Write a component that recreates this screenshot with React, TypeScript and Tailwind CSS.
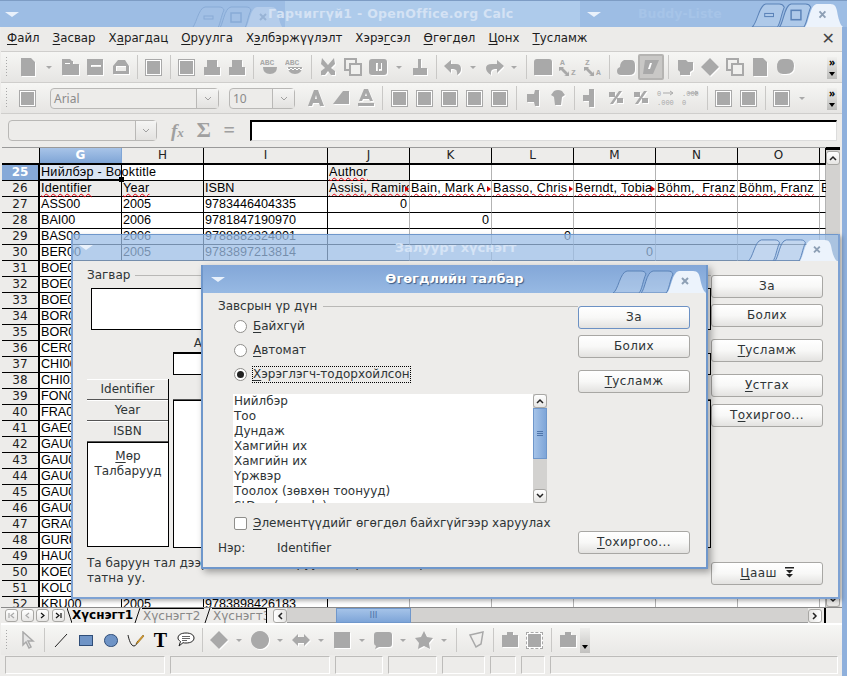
import React from "react";

const ui = "font-['DejaVu_Sans',sans-serif]";
const GRAY = "#a9a9a9";

const shapes: Record<string, string> = {
  doc: "M3 1h10l4 4v14H3z",
  open: "M1 2h8l2 2h1v3h6v11H1zM4 6v1h5V6z",
  save: "M1 2h16v16H1zM5 8v2h10V8z",
  mail: "M2 9l5-6h7l4 6v8H2zM5 9v5h10V9z",
  print: "M5 3h10v7h3v8H2v-8h3z",
  cut: "M4 1l6 7 6-7 1 6-4 4 4 3v4h-4l-3-4-3 4H3v-4l4-3-4-4z",
  paste: "M4 2h12q3 0 3 3v10q0 3-3 3H4q-3 0-3-3V5q0-3 3-3zM8 6v8h2V6zM13 6v6h-2v2h3V6z",
  brush: "M8 2h3v9h6v7H3v-7h5z",
  undo: "M8 3v4h5q5 0 5 5 0 4-4 6 1-6-4-6H8v4L1 9z",
  redo: "M13 3l7 6-7 7v-4h-2q-5 0-4 6-5-3-5-7 0-4 6-4h5z",
  table: "M4 2h12q3 0 3 3v13H1V5q0-3 3-3z",
  chart: "M8 3h7q4 0 4 5v5q0 5-6 5H5q-4 0-4-4 0-3 3-4 0-5 4-7z",
  nav: "M3 3h8l2 2h5v8l-3 2v3H5v-3l-2-2z",
  diamond: "M10 1l9 9-9 9-9-9z",
  blob: "M8 2h5q6 0 6 7 0 8-8 8H8q-6 0-6-7 0-8 6-8z",
  square: "M2 2h16v16H2z",
  circle: "M10 1a9 9 0 1 0 .01 0z",
  arrows: "M7 4v3h6V4l6 6-6 6v-3H7v3l-6-6z",
  callout: "M4 2h12q3 0 3 3v9q0 3-3 3H6l-4 2 1-3q-2-1-2-3V5q0-3 3-3z",
  star: "M10 1l3 6 6 1-4 5 1 6-6-3-6 3 1-6-4-5 6-1z",
  bag: "M7 5V2h6v3h5v12H2V5z",
  left: "M12 2l-1 4H4v8h7l1 4h4V2z",
  right: "M6 3q4-2 8 0l3 4-3 2-1 8H7l-1-8-3-2z",
  ins: "M8 1h5v18H8v-6H2V7h6z",
  pct: "M3 4h6v5H3zM11 10h6v5h-6zM13 3h3L7 16H4z",
  font: "M8 2h4l6 16h-4l-1-3H7l-1 3H2zM9 11h2l-1-4z",
  bold: "M12 3h6v13H2z",
  under: "M8 1h4l5 12h-3l-1-2H7l-1 2H3zM2 15h16v3H2zM9 8h2l-1-3z",
};

function Icon({ k }: { k: string }) {
  return (
    <span className="flex h-[24px] w-[25px] shrink-0 items-center justify-center">
      <svg width="20" height="20" viewBox="0 0 20 20">
        <path d={shapes[k]} fill="#fff" fillRule="evenodd" transform="translate(1 1)" />
        <path d={shapes[k]} fill={GRAY} fillRule="evenodd" />
      </svg>
    </span>
  );
}

function Framed({ wide }: { wide?: boolean }) {
  return (
    <span className="flex h-[24px] w-[25px] shrink-0 items-center justify-center">
      <span className={`${wide ? "border-dashed" : ""} flex h-[17px] w-[17px] items-center justify-center border border-[#a9a9a9] bg-white p-[1px]`}>
        <span className="block h-full w-full bg-[#a9a9a9]" />
      </span>
    </span>
  );
}

function Copy() {
  return (
    <span className="flex h-[24px] w-[25px] shrink-0 items-center justify-center">
      <svg width="20" height="20" viewBox="0 0 20 20" fill="none" stroke={GRAY} strokeWidth="2">
        <rect x="2" y="2" width="11" height="11" />
        <rect x="7" y="7" width="11" height="11" fill="#f0f0ee" />
      </svg>
    </span>
  );
}

function Spell({ wavy }: { wavy?: boolean }) {
  return (
    <span className="flex h-[24px] w-[25px] shrink-0 items-center justify-center">
      <svg width="20" height="20" viewBox="0 0 20 20">
        <text x="0" y="8" fontSize="8" fontWeight="700" fill={GRAY} fontFamily="Liberation Mono, monospace">ABC</text>
        <path d="M3 10h14q0 7-7 7t-7-7z" fill={GRAY} />
        {wavy && <path d="M2 11l2 2 2-2 2 2 2-2 2 2 2-2 2 2 2-2" stroke="#fff" fill="none" />}
      </svg>
    </span>
  );
}

function Small({ top, bottom }: { top: string; bottom: string }) {
  return (
    <span className="flex h-[24px] w-[25px] shrink-0 items-center justify-center">
      <svg width="22" height="20" viewBox="0 0 22 20">
        <text x="3" y="8" fontSize="8" fontWeight="700" fill={GRAY} fontFamily="Liberation Mono, monospace">{top}</text>
        <path d="M2 10l5 0-1 1 5 5 1-2 0 5-5 0 2-1-5-5-2 1z" fill={GRAY} />
        <text x="14" y="18" fontSize="8" fontWeight="700" fill={GRAY} fontFamily="Liberation Mono, monospace">{bottom}</text>
      </svg>
    </span>
  );
}

function Digits({ a, b }: { a: string; b: string }) {
  return (
    <span className="flex h-[24px] w-[25px] shrink-0 items-center justify-center">
      <svg width="22" height="20" viewBox="0 0 22 20">
        <text x="2" y="8" fontSize="7" fill={GRAY} fontFamily="Liberation Mono, monospace">{a}</text>
        <path d="M8 5h9M15 3l3 2-3 2" stroke={GRAY} fill="none" />
        <text x="2" y="17" fontSize="7" fill={GRAY} fontFamily="Liberation Mono, monospace">{b}</text>
      </svg>
    </span>
  );
}

const Arrow = ({ w = "w-[16px]" }: { w?: string }) => (
  <span className={`flex h-[24px] ${w} shrink-0 items-center justify-center`}>
    <span className="block h-0 w-0 border-x-[3px] border-t-[3px] border-x-transparent border-t-[#a9a9a9]" />
  </span>
);

const Sep = () => (
  <span className="flex h-[24px] w-[8px] shrink-0 justify-center">
    <span className="block h-full w-px bg-[#c9c8c6]" />
  </span>
);

const Handle = () => (
  <span className="mr-[7px] ml-[4px] h-[22px] w-[3px] shrink-0 bg-[radial-gradient(#a8a8a8_1px,transparent_1px)] bg-[length:3px_3px]" />
);

const Overflow = () => (
  <span className="absolute top-[5px] right-[5px] flex h-[22px] w-[10px] flex-col items-center justify-between bg-gradient-to-b from-[#f0f0ee] to-[#bdbdbb] text-[10px] leading-[10px] font-bold text-black">
    <span>»</span>
    <span className="mb-[3px] block h-0 w-0 border-x-[3px] border-t-[4px] border-x-transparent border-t-black" />
  </span>
);

function Tabs({ w = 94, h = 24, glyphs }: { w?: number; h?: number; glyphs?: boolean }) {
  return (
    <svg width={w} height={h} viewBox="0 0 94 24" preserveAspectRatio="none">
      <path d="M1 24C6 22 8 3 15 2h14c3 0 4 1 5 3-3 6-4 16-7 19z" fill="#fff" fillOpacity=".18" stroke="#5b83b8" />
      <path d="M29 24c4-3 5-21 12-22h15c3 0 4 1 5 3-3 6-4 16-7 19z" fill="#fff" fillOpacity=".18" stroke="#5b83b8" />
      <path d="M55 24c4-3 5-21 12-22h14c5 0 6 3 7 7 1 6 3 13 6 15z" fill="#ecf3fc" />
      <path d="M70 9l6 6M76 9l-6 6" stroke="#8d9fb5" strokeWidth="2" />
      {glyphs && <rect x="14" y="11" width="9" height="3" fill="none" stroke="#5b83b8" />}
      {glyphs && <rect x="41" y="8" width="10" height="9" fill="none" stroke="#5b83b8" strokeWidth="1.500" />}
    </svg>
  );
}

const Tri = () => (
  <span className="block h-0 w-0 border-x-[7px] border-t-[5px] border-x-transparent border-t-[#e9f1fb]" />
);

function Btn({ children, focus, className = "" }: { children: React.ReactNode; focus?: boolean; className?: string }) {
  return (
    <div className={`flex h-[23px] w-[112px] items-center justify-center rounded-[3px] border pb-[2px] ${focus ? "border-[#6c91c4]" : "border-[#a8a7a4]"} bg-gradient-to-b from-white via-[#f8f8f7] to-[#e3e2e0] text-[12px] tracking-[0.4px] text-[#2e3436] ${className}`}>
      {children}
    </div>
  );
}

const U = ({ children }: { children: React.ReactNode }) => <span className="underline underline-offset-2">{children}</span>;

function Chevron({ up, className = "" }: { up?: boolean; className?: string }) {
  return (
    <div className={`flex h-[14px] w-[14px] shrink-0 items-center justify-center rounded-[3px] border border-[#a8a7a4] bg-gradient-to-b from-white to-[#e6e5e3] ${className}`}>
      <svg width="8" height="6" viewBox="0 0 8 6" fill="none" stroke="#222" strokeWidth="1.5">
        <path d={up ? "M1 5l3-3 3 3" : "M1 1l3 3 3-3"} />
      </svg>
    </div>
  );
}

function Combo({ text, w, tw }: { text: string; w: string; tw: string }) {
  return (
    <div className={`flex h-[21px] ${w} shrink-0 rounded-[4px] border border-[#b9b8b6] bg-[#edecea]`}>
      <span className="flex-1 pl-[3px] text-[12px] leading-[19px] text-[#8b8b8b]">{text}</span>
      <span className={`flex ${tw} items-center justify-center border-l border-[#b9b8b6] bg-gradient-to-b from-[#f5f5f4] to-[#e3e2e0]`}>
        <svg width="8" height="5" viewBox="0 0 8 5" fill="none" stroke="#a0a0a0"><path d="M1 1l3 3 3-3" /></svg>
      </span>
    </div>
  );
}

const COLS = "grid-cols-[38px_82px_82px_124px_82px_82px_82px_82px_82px_82px_6px]";
const HEAD = ["G", "H", "I", "J", "K", "L", "M", "N", "O", ""];
const IDS = ["ASS00", "BAI00", "BAS00", "BER00", "BOE00", "BOE01", "BOE02", "BOR00", "BOR01", "CER00", "CHI00", "CHI01", "FON00", "FRA00", "GAE00", "GAU00", "GAU01", "GAU02", "GAU03", "GAU04", "GRA00", "GUR00", "HAU00", "KOE00", "KOL00", "KRU00"];
const YEARS: Record<number, [string, string]> = {
  27: ["2005", "9783446404335"],
  28: ["2006", "9781847190970"],
  29: ["2006", "9788882324001"],
  30: ["2005", "9783897213814"],
  52: ["2005", "9783898426183"],
};
const AUTHORS = ["Assisi, Ramiro", "Bain, Mark A", "Basso, Chris", "Berndt, Tobia", "Böhm,  Franz", "Böhm, Franz"];

function Cell({ children, className = "", line = "border-r-[#b3b3b3]" }: { children?: React.ReactNode; className?: string; line?: string }) {
  return (
    <div className={`relative h-4 whitespace-pre border-r border-b border-b-black pl-px text-[12.6px] leading-[15px] text-black ${line} ${className}`}>
      {children}
    </div>
  );
}

const Squig = ({ children }: { children: React.ReactNode }) => (
  <span className="tracking-[0.25px] underline decoration-red-600 decoration-wavy decoration-1 underline-offset-1">{children}</span>
);

const Cut = () => (
  <span className="absolute top-[5px] right-0 z-10 block h-0 w-0 border-y-[3px] border-l-[4px] border-y-transparent border-l-[#d40000]" />
);

const rowHead = `${ui} h-4 border-r-2 border-b border-r-black border-b-black text-center text-[12px] leading-[15px]`;

function Sheet() {
  const rows = [];
  for (let r = 27; r <= 52; r++) {
    const zero = r - 27;
    rows.push(
      <React.Fragment key={r}>
        <div className={`${rowHead} bg-[#edecea] text-[#222]`}>{r}</div>
        <Cell line="border-r-black">{IDS[zero]}</Cell>
        <Cell line="border-r-black">{YEARS[r]?.[0]}</Cell>
        <Cell line="border-r-black">{YEARS[r]?.[1]}</Cell>
        {[0, 1, 2, 3, 4, 5, 6].map((c) => (
          <Cell key={c} className="pr-[2px] text-right">{zero === c ? "0" : ""}</Cell>
        ))}
      </React.Fragment>
    );
  }
  return (
    <div className="relative flex h-[461px] shrink-0 bg-[#edecea] pt-[1px] pl-[1px]">
      <div className="w-[824px] overflow-hidden border-t border-t-[#9a9a9a] bg-white font-['Liberation_Sans',sans-serif]">
        <div className={`grid ${COLS} border-b-2 border-black`}>
          <div className="h-[15px] border-r border-black bg-[#edecea]" />
          {HEAD.map((h, i) => (
            <div key={i} className={`${ui} h-[15px] border-r text-center text-[12px] leading-[14px] ${h === "G" ? "border-[#7fa5d6] bg-gradient-to-b from-[#a8c4e8] to-[#7fa5d6] font-bold text-white" : "border-black bg-[#edecea] text-[#222]"}`}>
              {h}
            </div>
          ))}
        </div>
        <div className={`grid ${COLS}`}>
          <div className={`${rowHead} bg-[#86a9d8] font-bold text-white`}>25</div>
          <Cell line="border-r-black" className="z-10 border-b-2 bg-[#dbe5f3] tracking-[0.25px]">
            Нийлбэр - Booktitle
            <span className="absolute right-[-3px] bottom-[-3px] h-[5px] w-[5px] bg-black" />
          </Cell>
          <Cell line="border-r-black" />
          <Cell line="border-r-black" />
          <Cell line="border-r-black" className="bg-[#edecea]"><Squig>Author</Squig></Cell>
          {[0, 1, 2, 3, 4, 5].map((c) => <Cell key={c} />)}

          <div className={`${rowHead} bg-[#edecea] text-[#222]`}>26</div>
          <Cell line="border-r-black" className="bg-[#edecea]"><Squig>Identifier</Squig></Cell>
          <Cell line="border-r-black" className="bg-[#edecea]"><Squig>Year</Squig></Cell>
          <Cell line="border-r-black" className="bg-[#edecea]">ISBN</Cell>
          {AUTHORS.map((a, i) => (
            <Cell key={a + i} className={`overflow-hidden ${i === 0 ? "bg-[#edecea]" : ""}`}>
              <Squig>{a}</Squig>
              {i < 4 && <Cut />}
            </Cell>
          ))}
          <Cell>B</Cell>
          {rows}
        </div>
      </div>
      <div className="flex w-[14px] flex-col items-center bg-[#d3d2d0]">
        <div className="h-[3px] w-full bg-black" />
        <Chevron up className="mt-px" />
        <Chevron className="mt-auto" />
      </div>
    </div>
  );
}

function FrontDialog() {
  const items = ["Нийлбэр", "Тоо", "Дундаж", "Хамгийн их", "Хамгийн их", "Үржвэр", "Тоолох (зөвхөн тоонууд)", "StDev (sample)"];
  return (
    <div className={`${ui} absolute top-[265px] left-[201px] flex h-[304px] w-[507px] flex-col border-2 border-t-0 border-[#6f97cb] bg-[#edecea] text-[12px] text-[#2e3436] shadow-[3px_3px_7px_rgba(0,0,0,0.35)]`}>
      <div className="relative flex h-[28px] shrink-0 items-center justify-center bg-gradient-to-b from-[#83a7d8] to-[#97b9e3]">
        <span className="absolute top-[12px] left-[8px]"><Tri /></span>
        <span className="text-[13px] font-bold text-white [text-shadow:1px_1px_1px_#3a5a85]">Өгөгдлийн талбар</span>
        <span className="absolute right-0 bottom-0 flex"><Tabs /></span>
      </div>
      <div className="flex flex-1">
        <div className="w-[375px] shrink-0 pl-[15px]">
          <div className="mt-[4px] flex h-[18px] items-center">
            <span>Завсрын үр дүн</span>
            <span className="ml-[6px] h-px flex-1 bg-[#b9b8b6]" />
          </div>
          <div className="mt-[2px] flex flex-col gap-[6px] pl-[16px]">
            {[["Б", "айхгүй"], ["А", "втомат"], ["Х", "эрэглэгч-тодорхойлсон"]].map(([a, b], i) => (
              <div key={a} className="flex h-[18px] items-center">
                <span className="flex h-[13px] w-[13px] items-center justify-center rounded-full border border-[#8f8e8b] bg-white">
                  {i === 2 && <span className="block h-[7px] w-[7px] rounded-full bg-[#222]" />}
                </span>
                <span className={`ml-[6px] leading-[15px] ${i === 2 ? "outline-1 outline-black outline-dotted" : ""}`}><U>{a}</U>{b}</span>
              </div>
            ))}
          </div>
          <div className="mt-[11px] ml-[15px] flex h-[109px] w-[314px]">
            <div className="h-full flex-1 overflow-hidden bg-white pl-px leading-[15px]">
              {items.map((t, i) => <div key={i} className="h-[15px]">{t}</div>)}
            </div>
            <div className="flex w-[14px] flex-col bg-[#d3d2d0]">
              <Chevron up />
              <div className="flex h-[51px] flex-col items-center justify-center gap-px border border-[#6f97cb] bg-gradient-to-r from-[#a5c3e8] to-[#7ea5d8]">
                <span className="h-px w-[6px] bg-[#4e75aa]" />
                <span className="h-px w-[6px] bg-[#4e75aa]" />
                <span className="h-px w-[6px] bg-[#4e75aa]" />
              </div>
              <div className="flex-1" />
              <Chevron />
            </div>
          </div>
          <div className="mt-[12px] ml-[16px] flex h-[16px] items-center">
            <span className="h-[13px] w-[13px] rounded-[2px] border border-[#8f8e8b] bg-white" />
            <span className="ml-[6px]"><U>Э</U>лементүүдийг өгөгдөл байхгүйгээр харуулах</span>
          </div>
          <div className="mt-[8px] flex h-[18px] items-center">
            <span className="w-[59px]">Нэр:</span>
            <span>Identifier</span>
          </div>
        </div>
        <div className="flex flex-col pt-[13px]">
          <Btn focus>За</Btn>
          <Btn className="mt-[6px]">Болих</Btn>
          <Btn className="mt-[12px]"><span><U>Т</U>усламж</span></Btn>
          <Btn className="mt-[138px]"><span><U>Т</U>охиргоо...</span></Btn>
        </div>
      </div>
    </div>
  );
}

function BackDialog() {
  return (
    <div className={`${ui} absolute top-[234px] left-[71px] flex h-[365px] w-[769px] flex-col border-2 border-t-0 border-[#7ea2d3] text-[12px] text-[#2e3436] shadow-[2px_2px_4px_rgba(0,0,0,0.3)]`}>
      <div className="relative flex h-[27px] shrink-0 items-center justify-center border-t border-[#6f97cb] bg-[#9cbde6]/75">
        <span className="absolute top-[10px] left-[6px]"><Tri /></span>
        <span className="text-[13px] font-bold text-[#d6e4f6]">Залуурт хүснэгт</span>
        <span className="absolute right-[1px] bottom-0 flex"><Tabs w={90} h={23} /></span>
      </div>
      <div className="flex flex-1 bg-[#edecea]">
        <div className="w-[638px] shrink-0 pl-[14px]">
          <div className="mt-[6px] flex h-[16px] items-center">
            <span>Загвар</span>
            <span className="ml-[5px] h-px flex-1 bg-[#b9b8b6]" />
          </div>
          <div className="mt-[5px] ml-[4px] h-[42px] border border-black bg-white" />
          <div className="mt-[3px] ml-[86px] flex h-[20px] w-[82px] items-center justify-center border-b border-black bg-[#edecea]">Author</div>
          <div className="ml-[86px] h-[22px] border border-black bg-white" />
          <div className="mt-[4px] flex">
            <div className="flex h-[168px] w-[82px] flex-col border-r border-black">
              {["Identifier", "Year", "ISBN"].map((t) => (
                <div key={t} className="flex h-[21px] items-center justify-center border-t border-b border-t-white border-b-[#555] bg-[#edecea] pb-[2px]">{t}</div>
              ))}
              <div className="flex flex-1 flex-col items-center border border-r-0 border-black bg-white pt-[6px] text-center leading-[15px]">
                <span><U>М</U>өр</span>
                <span>Талбарууд</span>
              </div>
            </div>
            <div className="ml-[4px] flex flex-1 flex-col">
              <div className="h-[21px] border-b border-[#555] bg-[#edecea]" />
              <div className="h-[148px] border border-black bg-white" />
            </div>
          </div>
          <p className="mt-[8px] leading-[15px]">Та баруун тал дээр байгаа талбаруудыг хүссэн газартаа<br />татна уу.</p>
        </div>
        <div className="flex flex-col pt-[14px]">
          <Btn>За</Btn>
          <Btn className="mt-[6px]">Болих</Btn>
          <Btn className="mt-[12px]"><span><U>Т</U>усламж</span></Btn>
          <Btn className="mt-[12px]"><span><U>У</U>стгах</span></Btn>
          <Btn className="mt-[7px]"><span>Т<U>о</U>хиргоо...</span></Btn>
          <Btn className="mt-[135px]">
            <span className="flex items-center gap-[8px]">
              <span><U>Ц</U>ааш</span>
              <svg width="9" height="11" viewBox="0 0 9 11" fill="#222"><path d="M0 0h9v1.500H0zM1 3h7L4.500 6.500zM1 7h7l-3.500 3.500z" /></svg>
            </span>
          </Btn>
        </div>
      </div>
    </div>
  );
}

function TopBar() {
  return (
    <div className={`${ui} relative flex h-[27px] shrink-0 items-center border-t border-[#7d9cc4] bg-[#9dbde4]`}>
      <span className="absolute top-[11px] left-[5px]"><Tri /></span>
      <div className="absolute top-0 bottom-0 left-[285px] w-[295px] bg-[#aecbeb]" />
      <span className="absolute top-[4px] left-[190px] opacity-30"><Tabs glyphs /></span>
      <span className="absolute left-[268px] text-[12.5px] font-bold tracking-[0.3px] whitespace-nowrap text-[#d4e2f4]">Гарчиггүй1 - OpenOffice.org Calc</span>
      <span className="absolute top-[11px] left-[587px]"><Tri /></span>
      <span className="absolute left-[638px] text-[12.5px] font-bold text-[#a6c4e8]">Buddy-Liste</span>
      <span className="absolute right-[4px] bottom-0 flex"><Tabs w={92} h={25} glyphs /></span>
    </div>
  );
}

function Menu() {
  const items: [string, string, string][] = [
    ["", "Ф", "айл"], ["", "З", "асвар"], ["Х", "а", "рагдац"], ["", "О", "руулга"],
    ["Х", "э", "лбэржүүлэлт"], ["Хэрэ", "г", "сэл"], ["", "Ө", "гөгдөл"], ["", "Ц", "онх"], ["", "Т", "усламж"],
  ];
  return (
    <div className={`${ui} relative flex h-[24px] shrink-0 items-center gap-[13px] bg-[#ecebe9] pl-[6px] text-[11.8px] text-[#1c1c1c]`}>
      {items.map(([a, b, c]) => (
        <span key={b + c}>{a}<U>{b}</U>{c}</span>
      ))}
      <span className="absolute right-[7px] text-[16px] leading-none text-[#444]">✕</span>
    </div>
  );
}

const barCls = "relative flex h-[31px] shrink-0 items-center border-t border-t-[#cfcecc] bg-gradient-to-b from-[#f6f6f4] to-[#e6e5e3]";

function Row1() {
  return (
    <div className={barCls}>
      <Handle />
      <Icon k="doc" /><Arrow w="w-[18px]" /><Icon k="open" /><Icon k="save" /><Icon k="mail" /><Sep />
      <Framed /><Sep /><Framed /><Icon k="print" /><Icon k="print" /><Sep />
      <Spell /><Spell wavy /><Sep />
      <Icon k="cut" /><Copy /><Icon k="paste" /><Arrow w="w-[17px]" /><Icon k="brush" /><Sep />
      <Icon k="undo" /><Arrow /><Icon k="redo" /><Arrow /><Sep />
      <Icon k="table" /><Small top="A" bottom="Z" /><Small top="Z" bottom="A" /><Sep />
      <Icon k="chart" />
      <span className="flex h-[26px] w-[26px] items-center justify-center rounded-[2px] border-2 border-[#b5b4b2] bg-[#c9c8c6]">
        <svg width="18" height="18" viewBox="0 0 18 18"><path d="M3 2h14l-6 14H1z" fill={GRAY} /><path d="M8 5h2L8 11H6z" fill="#fff" /></svg>
      </span>
      <Sep />
      <Icon k="nav" /><Icon k="diamond" /><Copy /><Icon k="doc" /><Icon k="blob" />
      <Overflow />
    </div>
  );
}

function Row2() {
  return (
    <div className={barCls}>
      <Handle />
      <Framed />
      <span className="w-[10px]" />
      <Combo text="Arial" w="w-[169px]" tw="w-[22px]" />
      <span className="w-[10px]" />
      <Combo text="10" w="w-[66px]" tw="w-[22px]" />
      <span className="w-[8px]" />
      <Icon k="font" /><Icon k="bold" /><Icon k="under" /><Sep />
      <span className="w-[1px]" />
      <Framed /><Framed /><Framed /><Framed /><Framed /><Sep />
      <Icon k="left" /><Icon k="right" /><Sep />
      <Icon k="ins" /><Icon k="pct" /><Icon k="pct" /><Digits a="0" b=".000" /><Digits a=".000" b="0" /><Sep />
      <Framed /><Framed /><Sep />
      <Framed /><Arrow />
      <Overflow />
    </div>
  );
}

function FormulaBar() {
  return (
    <div className="flex h-[33px] shrink-0 items-center border-t border-t-[#cfcecc] bg-[#edecea] pl-[7px]">
      <Combo text="" w="w-[149px]" tw="w-[21px]" />
      <span className="ml-[14px] flex w-[64px] shrink-0 items-center justify-between font-['Liberation_Serif',serif] text-[#a0a0a0]">
        <span className="text-[19px] leading-none font-bold italic">f<span className="text-[13px]">x</span></span>
        <span className="text-[22px] leading-none font-bold">Σ</span>
        <span className="text-[20px] leading-none font-bold">=</span>
      </span>
      <div className="ml-[15px] h-[21px] w-[587px] border-t-2 border-r border-b border-l-2 border-t-black border-r-[#dcdcdc] border-b-[#dcdcdc] border-l-black bg-white" />
    </div>
  );
}

function NavBtn({ d, off }: { d: string; off?: boolean }) {
  return (
    <span className="flex h-[13px] w-[13px] items-center justify-center rounded-[3px] border border-[#a8a7a4] bg-gradient-to-b from-white to-[#e6e5e3]">
      <svg width="7" height="7" viewBox="0 0 7 7" fill="none" stroke={off ? "#a9a9a9" : "#111"} strokeWidth="1.2"><path d={d} /></svg>
    </span>
  );
}

function SheetTabs() {
  return (
    <div className={`${ui} flex h-[16px] shrink-0 items-stretch border-t border-[#8a8a8a] bg-[#edecea] pl-[4px]`}>
      <span className="flex w-[60px] shrink-0 items-center justify-between">
        <NavBtn off d="M1 1v5M6 1L3 3.5 6 6" />
        <NavBtn off d="M5 1L2 3.5 5 6" />
        <NavBtn d="M2 1l3 2.5L2 6" />
        <NavBtn d="M1 1l3 2.5L1 6M6 1v5" />
      </span>
      <svg className="ml-[2px] shrink-0" width="5" height="15" viewBox="0 0 5 15" stroke="#111" fill="none"><path d="M0 0l5 15" /></svg>
      <span className="w-[62px] shrink-0 text-[12px] leading-[14px] font-bold text-black">Хүснэгт1</span>
      <svg className="shrink-0" width="8" height="15" viewBox="0 0 8 15" stroke="#111" fill="none"><path d="M6 0L1 15" /></svg>
      <span className="w-[62px] shrink-0 border-t border-black pl-px text-[12px] leading-[14px] text-[#888]">Хүснэгт2</span>
      <svg className="shrink-0" width="8" height="15" viewBox="0 0 8 15" stroke="#111" fill="none"><path d="M6 0L1 15" /></svg>
      <span className="w-[55px] shrink-0 overflow-hidden border-t border-r border-black pl-px text-[12px] leading-[14px] whitespace-nowrap text-[#888]">Хүснэгт3</span>
      <span className="ml-[6px] flex w-[14px] shrink-0 items-center"><Chevron up className="-rotate-90" /></span>
      <div className="flex h-[15px] w-[521px] shrink-0 border-b border-[#9a9a9a] bg-[#d3d2d0] pl-[49px]">
        <span className="flex h-[15px] w-[75px] items-center justify-center border border-[#6f97cb] bg-gradient-to-b from-[#a5c3e8] to-[#7ea5d8] text-[9px] leading-none text-[#4e75aa]">III</span>
      </div>
      <span className="flex w-[14px] shrink-0 items-center"><Chevron up className="rotate-90" /></span>
      <span className="ml-[2px] h-[15px] w-[2px] shrink-0 bg-black" />
    </div>
  );
}

function DrawBar() {
  const Line = () => (
    <span className="flex h-[24px] w-[25px] items-center justify-center">
      <svg width="16" height="16" viewBox="0 0 16 16" stroke="#222"><path d="M2 15L14 2" /></svg>
    </span>
  );
  return (
    <div className="flex h-[32px] shrink-0 items-center border-t-2 border-t-white bg-gradient-to-b from-[#f6f6f4] to-[#e9e8e6]">
      <Handle />
      <span className="flex h-[24px] w-[25px] items-center justify-center">
        <svg width="14" height="18" viewBox="0 0 14 18"><path d="M2 1l10 9H7l3 6-2 1-3-6-3 3z" fill="#e6e6e6" stroke={GRAY} strokeWidth="1.5" /></svg>
      </span>
      <Sep />
      <Line />
      <span className="flex h-[24px] w-[25px] items-center justify-center"><span className="h-[11px] w-[14px] border border-[#2f4d78] bg-[#6f94c6]" /></span>
      <span className="flex h-[24px] w-[25px] items-center justify-center"><span className="h-[13px] w-[14px] rounded-full border border-[#2f4d78] bg-[#6f94c6]" /></span>
      <span className="flex h-[24px] w-[25px] items-center justify-center">
        <svg width="18" height="16" viewBox="0 0 18 16" fill="none"><path d="M1 3c1 5 3 11 6 11 2 0 3-3 4-5" stroke="#222" /><path d="M10 10l6-7 1 1-6 7-2 1z" fill="#e8a320" stroke="#6a4a10" strokeWidth=".5" /></svg>
      </span>
      <span className="flex h-[24px] w-[25px] items-center justify-center font-['Liberation_Serif',serif] text-[20px] leading-none font-bold text-black">T</span>
      <span className="flex h-[24px] w-[25px] items-center justify-center">
        <svg width="18" height="16" viewBox="0 0 18 16" fill="#fff" stroke="#222"><path d="M9 1c5 0 8 2 8 5s-3 5-8 5c-1 0-2 0-3-.3L2 14l1.500-4.500C2 8.500 1 7.500 1 6c0-3 3-5 8-5z" /><path d="M5 4.500h8M5 6.500h8M5 8.500h5" strokeWidth=".7" /></svg>
      </span>
      <Sep />
      <Icon k="diamond" /><Arrow /><Icon k="circle" /><Arrow /><Icon k="arrows" /><Arrow /><Icon k="square" /><Arrow /><Icon k="callout" /><Arrow /><Icon k="star" /><Arrow /><Sep />
      <span className="w-[4px]" />
      <span className="flex h-[24px] w-[25px] items-center justify-center">
        <svg width="16" height="18" viewBox="0 0 16 18" fill="none" stroke={GRAY} strokeWidth="1.5"><path d="M1 4l13-3-2 12-5 3z" /></svg>
      </span>
      <Sep />
      <Icon k="bag" />
      <Framed wide />
      <Sep />
      <Icon k="bag" />
      <span className="relative flex h-[25px] w-[10px] items-end justify-center bg-gradient-to-b from-[#eeeeec] to-[#c2c1bf] pb-[4px]">
        <span className="block h-0 w-0 border-x-[3px] border-t-[4px] border-x-transparent border-t-black" />
      </span>
    </div>
  );
}

function StatusBar() {
  const widths = ["w-[160px]", "w-[160px]", "w-[48px]", "w-[49px]", "w-[43px]", "w-[26px]", "w-[24px]", "w-[288px]"];
  return (
    <div className="flex h-[21px] shrink-0 gap-[5px] bg-[#edecea] pt-[1px] pb-[2px] pl-[4px]">
      {widths.map((w, i) => (
        <span key={i} className={`${w} shrink-0 border border-[#bdbcba] border-b-white border-r-white bg-[#edecea]`} />
      ))}
    </div>
  );
}

export default function App() {
  return (
    <div className="relative h-[676px] w-[847px] overflow-hidden bg-[#8fb0dc]">
      <TopBar />
      <div className="flex w-[842px] flex-col bg-[#edecea] pl-px">
        <Menu />
        <Row1 />
        <Row2 />
        <FormulaBar />
        <Sheet />
        <SheetTabs />
        <DrawBar />
        <StatusBar />
      </div>
      <BackDialog />
      <FrontDialog />
    </div>
  );
}
